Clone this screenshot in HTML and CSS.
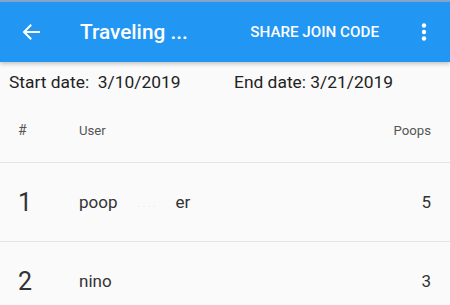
FILE: index.html
```html
<!DOCTYPE html>
<html>
<head>
<meta charset="utf-8">
<link rel="stylesheet" href="styles.css">
</head>
<body>
<div class="status"></div>
<header class="appbar">
  <div class="back">
    <svg width="18" height="16" viewBox="0 0 18 16"><path d="M17 8H2.5M8.5 1.5L2 8l6.5 6.5" fill="none" stroke="#fff" stroke-width="2" stroke-linecap="square"/></svg>
  </div>
  <div class="title">Traveling ...</div>
  <div class="action">SHARE JOIN CODE</div>
  <div class="more">
    <svg width="6" height="18" viewBox="0 0 6 18"><circle cx="3" cy="2.5" r="2.2" fill="#fff"/><circle cx="3" cy="9" r="2.2" fill="#fff"/><circle cx="3" cy="15.5" r="2.2" fill="#fff"/></svg>
  </div>
</header>
<main>
  <div class="dates">
    <span class="start">Start date:&nbsp; 3/10/2019</span>
    <span class="end">End date: 3/21/2019</span>
  </div>
  <div class="row head">
    <span class="num">#</span>
    <span class="user">User</span>
    <span class="count">Poops</span>
  </div>
  <div class="row data">
    <span class="num">1</span>
    <span class="user">poop<span class="redact">. . . .</span>er</span>
    <span class="count">5</span>
  </div>
  <div class="row data">
    <span class="num">2</span>
    <span class="user">nino</span>
    <span class="count">3</span>
  </div>
</main>
</body>
</html>
```
FILE: styles.css
```css
html, body {
  margin: 0;
  padding: 0;
  background: #fafafa;
  font-family: Roboto, "Noto Sans", sans-serif;
  overflow: hidden;
}
.status {
  height: 2px;
  background: #86a8c9;
}
.appbar {
  height: 60px;
  background: #2196f3;
  display: flex;
  align-items: center;
  color: #fff;
  box-shadow: 0 2px 4px rgba(0,0,0,0.22);
  position: relative;
}
.back {
  width: 22px;
  padding-left: 22px;
  display: flex;
  align-items: center;
}
.title {
  margin-left: 36px;
  font-size: 20.8px;
  font-weight: 500;
  flex: 1;
}
.action {
  font-size: 15.2px;
  font-weight: 500;
  margin-right: 42px;
}
.more {
  width: 6px;
  margin-right: 23px;
  display: flex;
}
.dates {
  height: 33px;
  padding-top: 3px;
  display: flex;
  align-items: center;
  font-size: 17.4px;
  color: #222;
  padding-left: 9px;
}
.start { width: 225px; }
.row {
  display: flex;
  align-items: center;
  padding: 0 19px 0 18px;
  border-bottom: 1px solid #e4e4e4;
}
.head {
  height: 64px;
  font-size: 13.2px;
  color: #555;
  padding-top: 0;
}
.head .num { font-size: 14px; }
.data {
  height: 78px;
  font-size: 17px;
  color: #333;
}
.num { width: 61px; }
.data .num { font-size: 25px; color: #333; }
.user { flex: 1; }
.redact {
  display: inline-block;
  width: 58px;
  color: #e8e8e8;
  font-size: 10px;
  text-align: center;
  vertical-align: middle;
}
.count { text-align: right; }
```
